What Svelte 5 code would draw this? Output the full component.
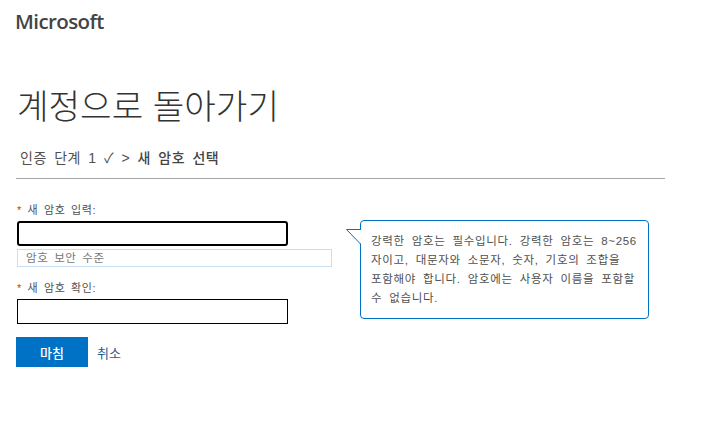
<script>
  const helpText = "강력한 암호는 필수입니다. 강력한 암호는 8~256자이고, 대문자와 소문자, 숫자, 기호의 조합을 포함해야 합니다. 암호에는 사용자 이름을 포함할 수 없습니다.";
</script>

<main>
  <div class="logo">Microsoft</div>

  <h1>계정으로 돌아가기</h1>

  <div class="steps">인증 단계 1 ✓ &gt; <strong>새 암호 선택</strong></div>

  <form>
    <div class="fields">
      <div class="left">
        <label for="pw"><span class="req">*</span> 새 암호 입력:</label>
        <input id="pw" class="focused" type="password" />
        <div class="strength">암호 보안 수준</div>

        <label class="second" for="pw2"><span class="req">*</span> 새 암호 확인:</label>
        <input id="pw2" type="password" />
      </div>

      <div class="tip">
        {helpText}
        <svg class="tail" width="16" height="16" viewBox="0 0 16 16">
          <path d="M1 1 L15 1 L15 15 Z" fill="#fff" />
          <path d="M15 0.5 L0.5 0.5 L14.5 15" fill="none" stroke="#0072c6" stroke-width="1" />
        </svg>
      </div>
    </div>

    <div class="actions">
      <button type="button">마침</button>
      <a href="#cancel">취소</a>
    </div>
  </form>
</main>

<style>
  :global(body) {
    background: #fff;
    font-family: "Liberation Sans", "Noto Sans CJK KR", sans-serif;
    color: #505050;
  }
  main {
    width: 714px;
    height: 431px;
    padding-left: 16px;
    box-sizing: border-box;
    overflow: hidden;
  }
  .logo {
    padding-top: 8px;
    height: 27px;
    margin-left: -1px;
    font-family: "Open Sans", sans-serif;
    font-weight: 600;
    font-size: 20.5px;
    line-height: 27px;
    letter-spacing: -0.6px;
    color: #444;
  }
  h1 {
    margin: 48px 0 0 1px;
    font-weight: 300;
    font-size: 34.3px;
    line-height: 48px;
    color: #333;
  }
  .steps {
    margin: 17px 0 0 4px;
    font-size: 14px;
    line-height: 20px;
    letter-spacing: 0.5px;
    word-spacing: 3px;
    color: #505050;
  }
  .steps strong {
    color: #444;
    font-weight: 500;
  }
  form {
    margin-top: 10px;
    border-top: 1px solid #a6a6a6;
    width: 649px;
  }
  .fields {
    display: flex;
    padding-top: 23px;
  }
  .left {
    width: 317px;
    padding-left: 1px;
  }
  label {
    display: block;
    font-size: 11px;
    line-height: 16px;
    height: 16px;
    letter-spacing: 0.6px;
    word-spacing: 2px;
    color: #505050;
  }
  .req {
    color: #c8400a;
  }
  input {
    display: block;
    box-sizing: border-box;
    width: 271px;
    height: 25px;
    margin: 3px 0 0;
    padding: 0 4px;
    border: 1px solid #000;
    background: #fff;
    outline: none;
  }
  input.focused {
    border: 2px solid #000;
    border-radius: 3px;
  }
  .strength {
    box-sizing: border-box;
    width: 315px;
    height: 18px;
    margin-top: 3px;
    padding-left: 8px;
    border: 1px solid #c7dff0;
    font-size: 11.5px;
    line-height: 16px;
    letter-spacing: 0.6px;
    word-spacing: 2px;
    color: #767676;
  }
  .second {
    margin-top: 13px;
  }
  .tip {
    position: relative;
    box-sizing: border-box;
    width: 289px;
    height: 99px;
    margin: 18px 0 0 26px;
    padding: 11px 10px 0;
    border: 1px solid #0072c6;
    border-radius: 4px;
    font-size: 11.5px;
    line-height: 19px;
    letter-spacing: 0.7px;
    word-spacing: 3px;
    color: #505050;
    word-break: break-all;
  }
  .tail {
    position: absolute;
    left: -15px;
    top: 8px;
  }
  .actions {
    display: flex;
    align-items: center;
    margin-top: 13px;
  }
  button {
    width: 72px;
    height: 30px;
    border: 0;
    padding: 0;
    background: #0072c6;
    color: #fff;
    font: inherit;
    font-size: 13px;
    font-weight: 500;
  }
  a {
    margin-left: 9px;
    font-size: 13px;
    color: #1d5c94;
    text-decoration: none;
  }
</style>
